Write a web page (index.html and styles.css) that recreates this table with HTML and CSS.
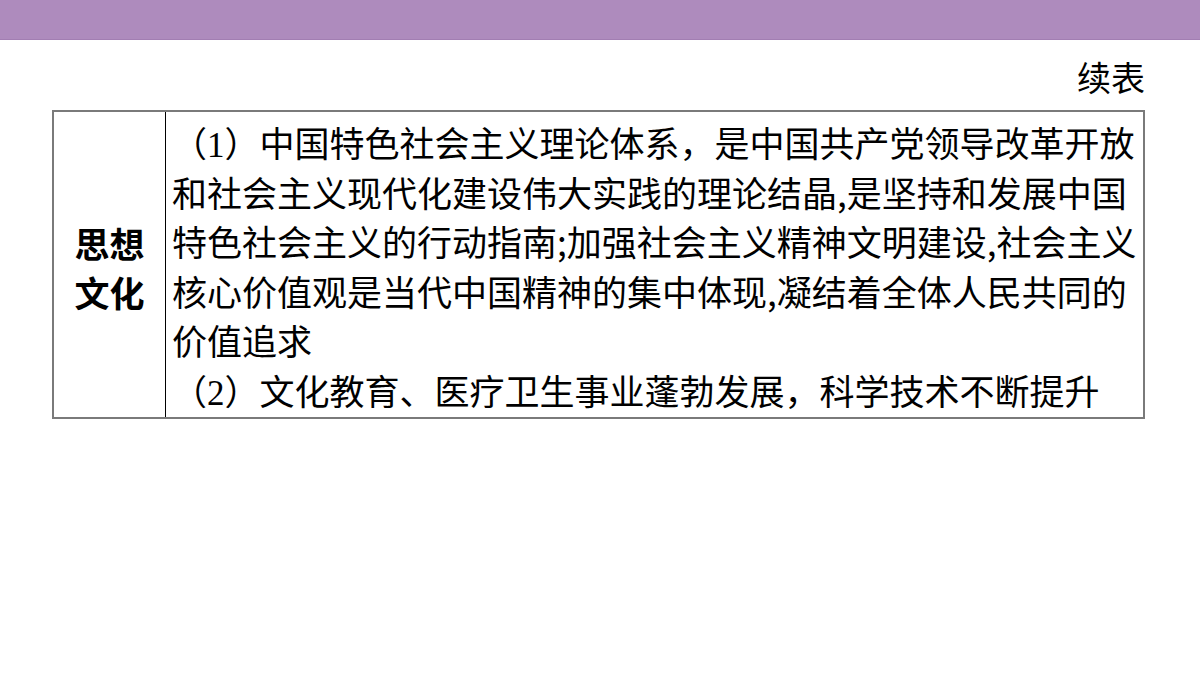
FILE: index.html
```html
<!DOCTYPE html>
<html lang="zh-CN">
<head>
<meta charset="utf-8">
<title>续表</title>
<link rel="stylesheet" href="styles.css">
</head>
<body>
<div class="topbar"></div>
<div class="page">
  <div class="caption">续表</div>
  <div class="table">
    <div class="head-cell">思想<br>文化</div>
    <div class="body-cell"><span class="paren">（<span class="num">1</span>）</span>中国特色社会主义理论体系，是中国共产党领导改革开放<br>和社会主义现代化建设伟大实践的理论结晶,是坚持和发展中国<br>特色社会主义的行动指南;加强社会主义精神文明建设,社会主义<br>核心价值观是当代中国精神的集中体现,凝结着全体人民共同的<br>价值追求<br><span class="paren">（<span class="num">2</span>）</span>文化教育、医疗卫生事业蓬勃发展，科学技术不断提升</div>
  </div>
</div>
</body>
</html>
```

FILE: styles.css
```css
html, body {
  margin: 0;
  padding: 0;
  background: #ffffff;
}

body {
  width: 1200px;
  height: 675px;
  overflow: hidden;
  font-family: "Noto Sans CJK SC", "Noto Sans", sans-serif;
  color: #000000;
}

.topbar {
  height: 39px;
  background: #ae8bbd;
  border-bottom: 1px solid #a27eb2;
}

.page {
  padding: 0 55px 0 52px;
}

.caption {
  margin-top: 12px;
  margin-bottom: 9px;
  height: 49px;
  line-height: 49px;
  font-size: 34px;
  text-align: right;
}

.table {
  display: grid;
  grid-template-columns: 112px 1fr;
  border: 2px solid #7a7a7a;
}

.head-cell {
  border-right: 1px solid #000000;
  display: flex;
  align-items: center;
  justify-content: center;
  text-align: center;
  font-weight: bold;
  font-size: 35px;
  line-height: 49px;
  padding-top: 5px;
  box-sizing: border-box;
}

.body-cell {
  padding: 5px 0 3px 6px;
  font-size: 35px;
  line-height: 49.5px;
  white-space: nowrap;
}

.num {
  font-family: "Liberation Serif", serif;
  line-height: 0;
}
```
